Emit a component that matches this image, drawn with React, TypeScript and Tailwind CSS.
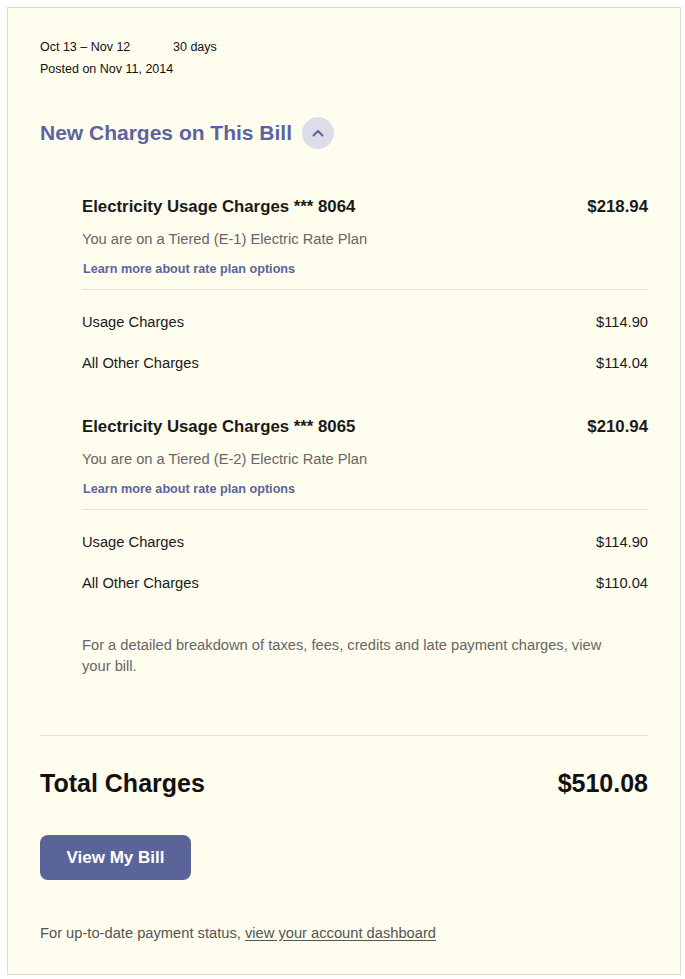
const font = { fontFamily: '"Liberation Sans", Arial, sans-serif' };

interface ChargeLine {
  label: string;
  amount: string;
}

interface Account {
  id: string;
  total: string;
  plan: string;
  lines: ChargeLine[];
}

const accounts: Account[] = [
  {
    id: "8064",
    total: "$218.94",
    plan: "E-1",
    lines: [
      { label: "Usage Charges", amount: "$114.90" },
      { label: "All Other Charges", amount: "$114.04" },
    ],
  },
  {
    id: "8065",
    total: "$210.94",
    plan: "E-2",
    lines: [
      { label: "Usage Charges", amount: "$114.90" },
      { label: "All Other Charges", amount: "$110.04" },
    ],
  },
];

function AccountBlock({ account, first }: { account: Account; first: boolean }) {
  return (
    <div className={first ? "mt-[46px]" : "mt-[41px]"}>
      <div className="flex justify-between text-[16.8px] font-bold leading-[24px] text-[#1a1a1a]">
        <span>Electricity Usage Charges *** {account.id}</span>
        <span>{account.total}</span>
      </div>
      <p className="mt-[9px] text-[14.7px] leading-[22px] text-[#666]">
        You are on a Tiered ({account.plan}) Electric Rate Plan
      </p>
      <a className="mt-[10px] block pl-px text-[12.65px] font-bold leading-[18px] text-[#5b64a1]">
        Learn more about rate plan options
      </a>
      <div className="mt-[11px] h-px bg-[#e2e0d6]" />
      {account.lines.map((line, i) => (
        <div
          key={line.label}
          className={`flex justify-between text-[14.7px] leading-[22px] text-[#1a1a1a] ${
            i === 0 ? "mt-[21px]" : "mt-[19px]"
          }`}
        >
          <span>{line.label}</span>
          <span>{line.amount}</span>
        </div>
      ))}
    </div>
  );
}

export default function App() {
  return (
    <div className="min-h-screen bg-white pt-[7px] pb-[4px] pl-[7px] pr-[4px]" style={font}>
      <div className="border border-[#dddcd4] bg-[#fffdee] px-[32px] pt-[28px] pb-[31px]">
        {/* billing period */}
        <div className="text-[12.5px] leading-[22px] text-[#111]">
          <div className="flex">
            <span className="w-[133px]">Oct 13 – Nov 12</span>
            <span>30 days</span>
          </div>
          <div>Posted on Nov 11, 2014</div>
        </div>

        {/* section title */}
        <div className="mt-[37px] flex items-center gap-[10px]">
          <h2 className="text-[21px] font-bold leading-[32px] text-[#5b64a1]">New Charges on This Bill</h2>
          <button className="flex h-[32px] w-[32px] items-center justify-center rounded-full bg-[#dcdde9]">
            <svg width="12" height="8" viewBox="0 0 12 8" fill="none">
              <polyline points="1.5,6.5 6,2 10.5,6.5" stroke="#5b64a1" strokeWidth="2" strokeLinecap="round" strokeLinejoin="round" />
            </svg>
          </button>
        </div>

        <div className="pl-[42px]">
          {accounts.map((a, i) => (
            <AccountBlock key={a.id} account={a} first={i === 0} />
          ))}
          <p className="mt-[41px] max-w-[530px] text-[14.7px] leading-[21px] text-[#666]">
            For a detailed breakdown of taxes, fees, credits and late payment charges, view your bill.
          </p>
        </div>

        <div className="mt-[58px] h-px bg-[#e2e0d6]" />

        <div className="mt-[31px] flex justify-between text-[25px] font-bold leading-[32px] text-[#111]">
          <span>Total Charges</span>
          <span>$510.08</span>
        </div>

        <button className="mt-[36px] flex h-[45px] w-[151px] items-center justify-center rounded-[8px] bg-[#5b6499] text-[17px] font-bold text-white">
          View My Bill
        </button>

        <p className="mt-[43px] text-[14.7px] leading-[20px] text-[#555]">
          For up-to-date payment status,{" "}
          <a className="underline underline-offset-2">view your account dashboard</a>
        </p>
      </div>
    </div>
  );
}
